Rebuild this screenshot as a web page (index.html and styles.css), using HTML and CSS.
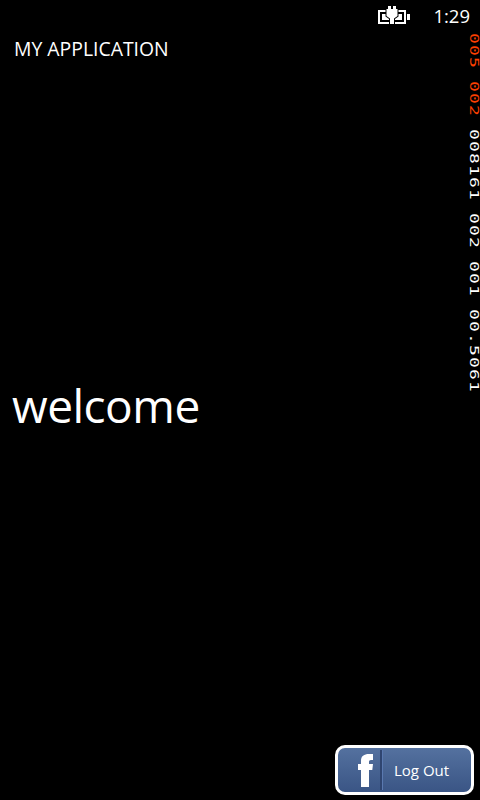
FILE: index.html
```html
<!DOCTYPE html>
<html lang="en">

<head>
    <meta charset="UTF-8">
    <meta name="viewport" content="width=device-width, initial-scale=1.0">
    <title>My Application</title>
    <link rel="stylesheet" href="styles.css">
</head>

<body>
    <div class="phone">
        <div class="status-bar">
            <svg class="battery" width="32" height="20" viewBox="0 0 32 20">
                <path d="M1 6h26v12H1z" fill="none" stroke="#fff" stroke-width="2" />
                <path d="M4 9h20v6H4z" fill="#fff" />
                <path d="M29 9h3v6h-3z" fill="#fff" />
                <path d="M10 1h3v3h2V1h3v3h1.500v7L16 13.500V19h-4v-5.500L8.500 11V4H10z" fill="#fff" stroke="#000" stroke-width="2" paint-order="stroke" />
            </svg>
            <span class="clock">1:29</span>
        </div>
        <div class="app-title">MY APPLICATION</div>
        <div class="content">
            <div class="welcome">welcome</div>
        </div>
        <div class="footer">
            <button class="fb-btn">
                <span class="fb-logo">
                    <svg width="16" height="33" viewBox="0 0 16 33">
                        <path d="M3 33V16H0v-6h3V7C3 2 6 0 11 0h4v6h-2c-1.500 0-2 .7-2 2v2h4l-.7 6H11v17z" fill="#fff" />
                    </svg>
                </span>
                <span class="fb-text">Log Out</span>
            </button>
        </div>

        <div class="counters"><span class="num-red">005 002 </span>008161 002 001 00.5061</div>
    </div>
</body>

</html>
```

FILE: styles.css
```css
body {
    margin: 0;
    background-color: #000;
    color: #fff;
    font-family: 'Open Sans', sans-serif;
}

.phone {
    position: relative;
    display: flex;
    flex-direction: column;
    width: 480px;
    height: 800px;
    overflow: hidden;
}

.status-bar {
    display: flex;
    justify-content: flex-end;
    align-items: flex-end;
    height: 32px;
    padding-right: 10px;
    box-sizing: border-box;
}

.battery {
    margin: 0 23px 7px 0;
}

.clock {
    font-size: 18.500px;
    line-height: 26px;
    margin-bottom: 3px;
}

.app-title {
    padding: 5px 0 0 14px;
    font-size: 19.4px;
    line-height: 24px;
}

.content {
    flex: 1;
    display: flex;
    flex-direction: column;
    padding: 312px 0 0 12px;
}

.welcome {
    font-size: 46px;
    line-height: 64px;
    letter-spacing: -0.5px;
}

.footer {
    display: flex;
    justify-content: flex-end;
    padding: 0 6px 5px 0;
}

.fb-btn {
    display: flex;
    align-items: center;
    width: 139px;
    height: 50px;
    padding: 0;
    border: 3px solid #fff;
    border-radius: 10px;
    background: linear-gradient(#54719f, #3a5585);
    color: #fff;
    box-sizing: border-box;
}

.fb-logo {
    display: flex;
    align-items: flex-end;
    width: 45px;
    height: 40px;
    padding: 0 0 3px 20px;
    border-right: 1px solid #5a79b0;
    box-shadow: inset -2px 0 0 #2f4570;
    box-sizing: border-box;
}

.fb-text {
    margin-left: 11px;
    font-family: 'Open Sans', sans-serif;
    font-size: 15px;
}

.counters {
    position: absolute;
    top: 33px;
    right: 1px;
    width: 10px;
    writing-mode: vertical-rl;
    white-space: pre;
    font-family: 'DejaVu Sans Mono', monospace;
    font-size: 18px;
    line-height: 10px;
    letter-spacing: 1.16px;
    transform: scaleX(0.7);
    transform-origin: center top;
}

.num-red {
    color: #ff4000;
}
```
